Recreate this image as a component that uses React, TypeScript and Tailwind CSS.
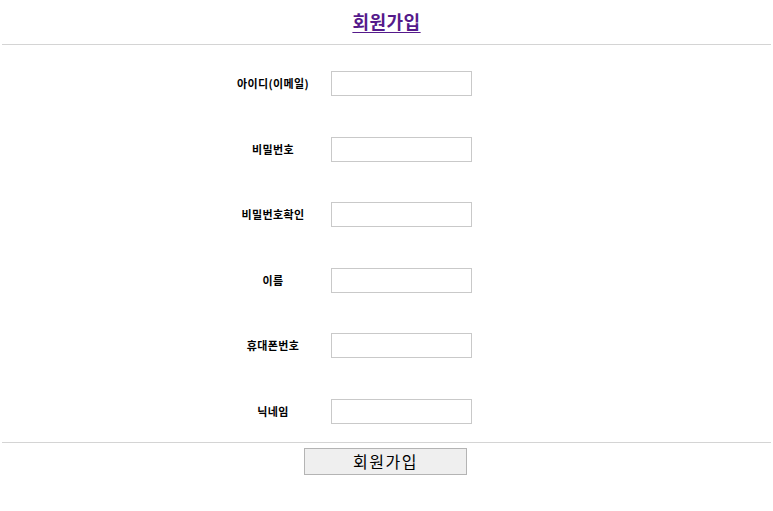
const fields = ["아이디(이메일)", "비밀번호", "비밀번호확인", "이름", "휴대폰번호", "닉네임"];

export default function App() {
  return (
    <div
      className="min-h-[511px] w-full bg-white text-black"
      style={{ fontFamily: '"Noto Sans CJK KR", "Noto Sans", sans-serif' }}
    >
      {/* Title */}
      <div className="flex h-[44px] items-center justify-center pb-[2px]">
        <a
          href="#"
          className="text-[18px] font-bold leading-none tracking-[0.5px] text-[#551a8b] underline underline-offset-[3px]"
        >
          회원가입
        </a>
      </div>
      <div className="mx-[2px] h-px bg-[#d4d4d4]" />

      {/* Form rows */}
      <div className="flex flex-col gap-[40.5px] pl-[223px] pt-[26px]">
        {fields.map((label) => (
          <div key={label} className="flex items-center">
            <div className="w-[100px] text-center text-[11px] font-bold tracking-[0.4px]">{label}</div>
            <input
              type="text"
              className="ml-[8px] h-[25px] w-[141px] border border-[#c9c9c9] bg-white px-1 text-[12px] outline-none"
            />
          </div>
        ))}
      </div>

      <div className="mx-[2px] mt-[18px] h-px bg-[#d4d4d4]" />

      {/* Submit */}
      <div className="flex justify-center pr-[2px] pt-[5px]">
        <button
          type="button"
          className="h-[27px] w-[163px] border border-[#b4b4b4] bg-[#efefef] text-[16px] leading-none tracking-[1.5px] text-black"
        >
          회원가입
        </button>
      </div>
    </div>
  );
}
